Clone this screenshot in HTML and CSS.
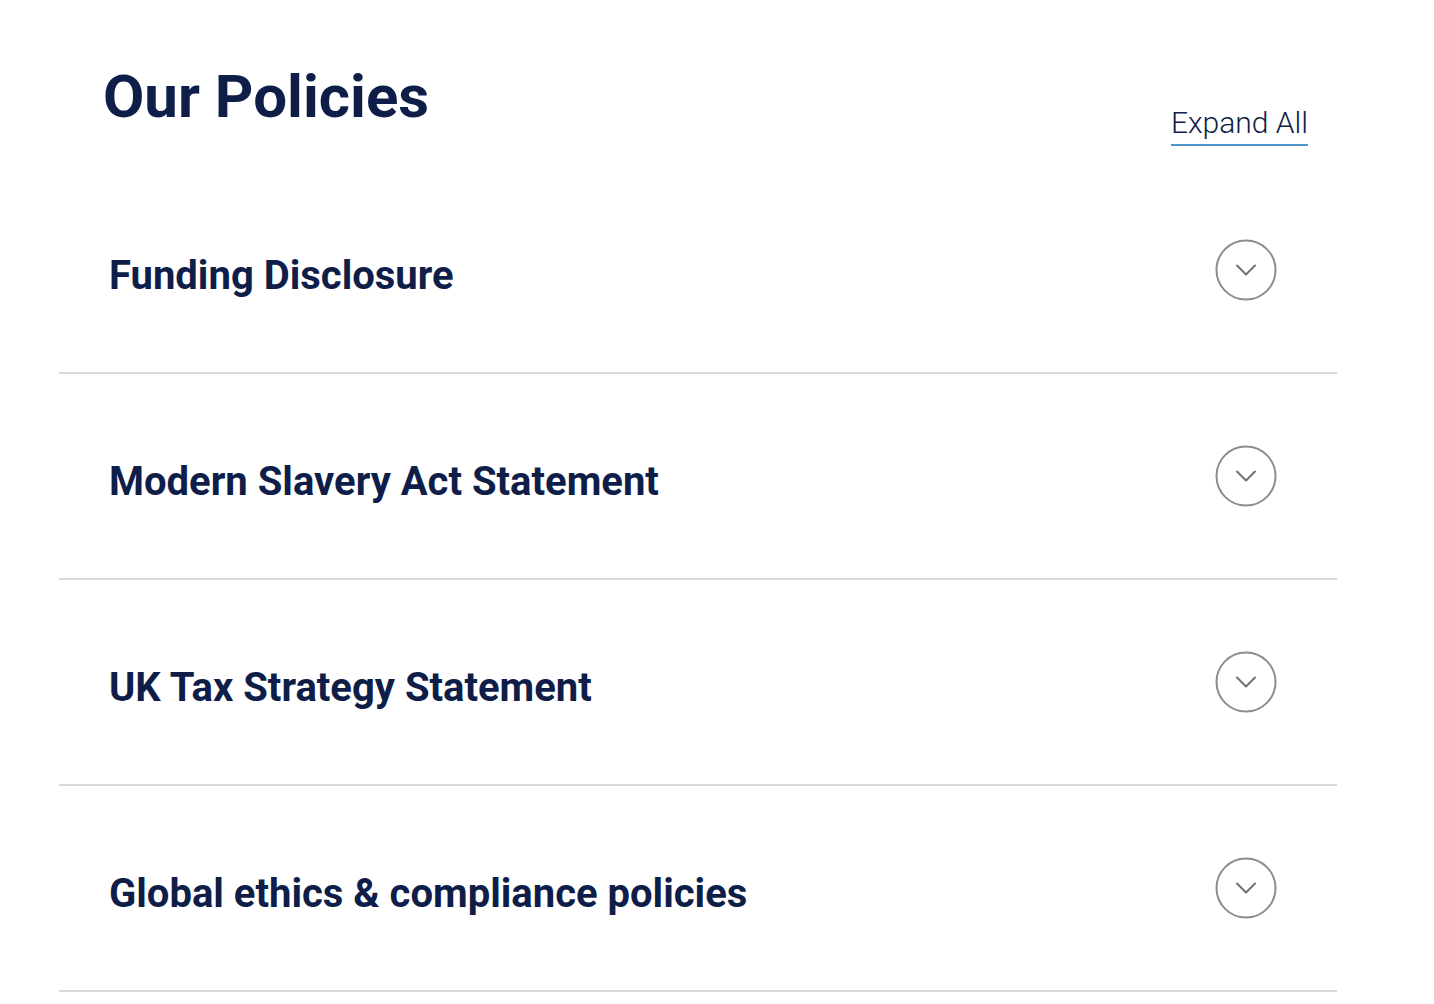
FILE: index.html
```html
<!DOCTYPE html>
<html lang="en">
<head>
<meta charset="utf-8">
<title>Our Policies</title>
<link rel="stylesheet" href="styles.css">
</head>
<body>
<main class="policies">
  <header class="policies-header">
    <h1 class="policies-title">Our Policies</h1>
    <a class="expand-all" href="#">Expand All</a>
  </header>
  <ul class="accordion">
    <li class="accordion-item">
      <span class="accordion-label">Funding Disclosure</span>
      <span class="accordion-icon"><svg viewBox="0 0 62 62" width="62" height="62"><circle cx="31" cy="31" r="29.5" fill="none" stroke="#8c8c8c" stroke-width="2"/><path d="M22 26.5 L31 35.5 L40 26.5" fill="none" stroke="#707070" stroke-width="2" stroke-linecap="round" stroke-linejoin="round"/></svg></span>
    </li>
    <li class="accordion-item">
      <span class="accordion-label">Modern Slavery Act Statement</span>
      <span class="accordion-icon"><svg viewBox="0 0 62 62" width="62" height="62"><circle cx="31" cy="31" r="29.5" fill="none" stroke="#8c8c8c" stroke-width="2"/><path d="M22 26.5 L31 35.5 L40 26.5" fill="none" stroke="#707070" stroke-width="2" stroke-linecap="round" stroke-linejoin="round"/></svg></span>
    </li>
    <li class="accordion-item">
      <span class="accordion-label">UK Tax Strategy Statement</span>
      <span class="accordion-icon"><svg viewBox="0 0 62 62" width="62" height="62"><circle cx="31" cy="31" r="29.5" fill="none" stroke="#8c8c8c" stroke-width="2"/><path d="M22 26.5 L31 35.5 L40 26.5" fill="none" stroke="#707070" stroke-width="2" stroke-linecap="round" stroke-linejoin="round"/></svg></span>
    </li>
    <li class="accordion-item">
      <span class="accordion-label">Global ethics &amp; compliance policies</span>
      <span class="accordion-icon"><svg viewBox="0 0 62 62" width="62" height="62"><circle cx="31" cy="31" r="29.5" fill="none" stroke="#8c8c8c" stroke-width="2"/><path d="M22 26.5 L31 35.5 L40 26.5" fill="none" stroke="#707070" stroke-width="2" stroke-linecap="round" stroke-linejoin="round"/></svg></span>
    </li>
  </ul>
</main>
</body>
</html>
```
FILE: styles.css
```css
* { box-sizing: border-box; }
html, body { margin: 0; padding: 0; background: #ffffff; }
body { font-family: Roboto, "Liberation Sans", Arial, sans-serif; color: #0e1e48; }

.policies {
  width: 1278px;
  margin-left: 59px;
}

.policies-header {
  height: 168px;
  display: flex;
  justify-content: space-between;
  align-items: flex-start;
  padding-top: 61px;
}

.policies-title {
  margin: 0 0 0 44px;
  font-size: 60px;
  line-height: 72px;
  font-weight: 700;
  color: #0e1e48;
}

.expand-all {
  margin: 44px 29px 0 0;
  font-size: 30px;
  line-height: 36px;
  font-weight: 300;
  color: #0e1e48;
  text-decoration: none;
  border-bottom: 2px solid #4b97cc;
  padding-bottom: 3px;
}

.accordion {
  list-style: none;
  margin: 0;
  padding: 0;
}

.accordion-item {
  height: 206px;
  display: flex;
  align-items: center;
  justify-content: space-between;
  padding: 0 60px 0 50px;
  border-bottom: 2px solid #d9d9d9;
}

.accordion-label {
  font-size: 40px;
  line-height: 46px;
  font-weight: 700;
  color: #0e1e48;
  padding-top: 12px;
}

.accordion-icon {
  display: flex;
  width: 62px;
  height: 62px;
}
```
